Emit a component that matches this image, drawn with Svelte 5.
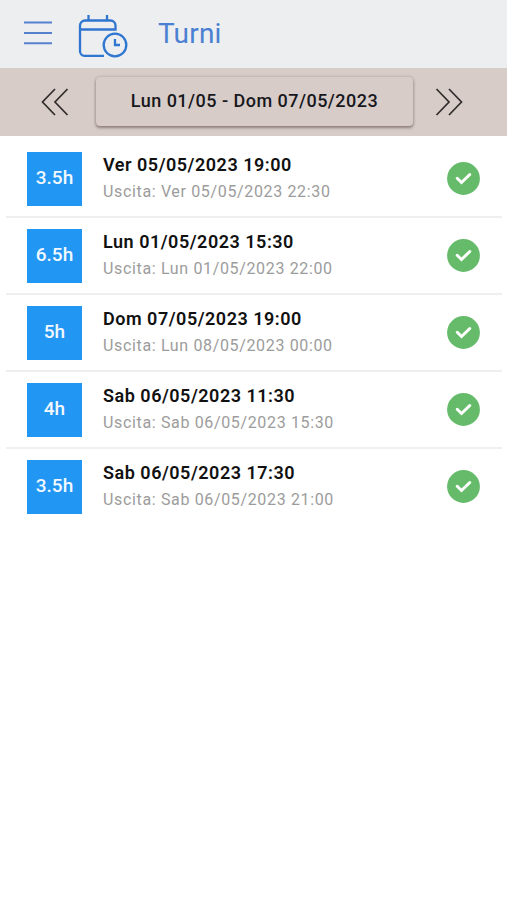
<script lang="ts">
	interface Shift {
		hours: string;
		start: string;
		end: string;
	}

	const shifts: Shift[] = [
		{ hours: '3.5h', start: 'Ver 05/05/2023 19:00', end: 'Ver 05/05/2023 22:30' },
		{ hours: '6.5h', start: 'Lun 01/05/2023 15:30', end: 'Lun 01/05/2023 22:00' },
		{ hours: '5h', start: 'Dom 07/05/2023 19:00', end: 'Lun 08/05/2023 00:00' },
		{ hours: '4h', start: 'Sab 06/05/2023 11:30', end: 'Sab 06/05/2023 15:30' },
		{ hours: '3.5h', start: 'Sab 06/05/2023 17:30', end: 'Sab 06/05/2023 21:00' }
	];
</script>

<div class="page">
	<header>
		<button class="menu" aria-label="Menu">
			<svg width="28" height="26" viewBox="0 0 28 26">
				<path d="M0 2.5h28M0 13h28M0 23.2h28" />
			</svg>
		</button>
		<svg class="calendar" width="50" height="44" viewBox="0 0 50 44">
			<path d="M10.500 1v5M29 1v5" />
			<path d="M26 41.800H6.500a4.500 4.500 0 0 1-4.500-4.500V11.500a5 5 0 0 1 5-5H32.500a5 5 0 0 1 5 5v4H2" />
			<circle cx="37" cy="31" r="11.300" />
			<path d="M37 25v6h5" />
		</svg>
		<h1>Turni</h1>
	</header>

	<nav>
		<button class="arrow" aria-label="Settimana precedente">
			<svg width="28" height="28" viewBox="0 0 28 28">
				<path d="M14 1 1.500 14 14 27M26.500 1 14 14l12.500 13" />
			</svg>
		</button>
		<button class="range">Lun 01/05 - Dom 07/05/2023</button>
		<button class="arrow" aria-label="Settimana successiva">
			<svg width="28" height="28" viewBox="0 0 28 28">
				<path d="M1.500 1 14 14 1.500 27M14 1l12.500 13L14 27" />
			</svg>
		</button>
	</nav>

	<ul>
		{#each shifts as shift}
			<li>
				<span class="hours">{shift.hours}</span>
				<div class="times">
					<strong>{shift.start}</strong>
					<small>Uscita: {shift.end}</small>
				</div>
				<svg class="done" width="33" height="33" viewBox="0 0 33 33">
					<circle cx="16.500" cy="16.500" r="16.400" />
					<path d="m10.200 16.300 4.300 4.200 8.300-8" />
				</svg>
			</li>
		{/each}
	</ul>
</div>

<style>
	:global(body) {
		background: #fff;
	}

	.page {
		width: 507px;
		font-family: Roboto, 'Liberation Sans', sans-serif;
	}

	button {
		padding: 0;
		border: 0;
		background: none;
		color: inherit;
		font: inherit;
	}

	svg {
		display: block;
		flex: none;
		fill: none;
	}

	header {
		display: flex;
		box-sizing: border-box;
		height: 68px;
		padding: 0 24px;
		background: #eceef0;
		color: #4a80d2;
	}

	.menu {
		height: 66px;
	}

	.menu svg {
		stroke: #5581cf;
		stroke-width: 2;
	}

	.calendar {
		margin: 14px 0 0 26px;
		stroke: #2f76d0;
		stroke-width: 2.3;
	}

	h1 {
		margin: 0 0 0 30px;
		font-size: 28px;
		font-weight: 400;
		line-height: 67px;
		letter-spacing: 0.2px;
	}

	nav {
		display: flex;
		box-sizing: border-box;
		height: 68px;
		padding: 9px 43px 0 41px;
		background: #d7ccc8;
	}

	.arrow {
		height: 49px;
	}

	.arrow svg {
		stroke: #302b2b;
		stroke-width: 1.7;
	}

	.range {
		width: 317px;
		height: 49px;
		margin: 0 22px 0 27px;
		padding-bottom: 2px;
		border-radius: 4px;
		box-shadow:
			0 2px 3px rgb(70 50 45 / 45%),
			0 0 3px rgb(70 50 45 / 25%);
		color: #17171c;
		font-size: 18px;
		font-weight: 500;
		letter-spacing: 0.48px;
	}

	ul {
		margin: 0;
		padding: 5px 5px 0 6px;
		list-style: none;
	}

	li {
		display: flex;
		box-sizing: border-box;
		height: 77px;
		padding: 0 22px 0 21px;
		align-items: center;
		border-bottom: 2px solid #efefef;
	}

	li:last-child {
		border-bottom-color: transparent;
	}

	.hours {
		width: 55px;
		height: 54px;
		background: #2196f3;
		color: #f1f8ff;
		font-size: 19px;
		font-weight: 500;
		line-height: 52px;
		text-align: center;
	}

	.times {
		display: flex;
		flex: 1;
		flex-direction: column;
		margin: -2px 0 0 21px;
	}

	strong {
		color: #111;
		font-size: 18px;
		font-weight: 600;
		line-height: 27px;
		letter-spacing: 0.52px;
	}

	small {
		color: #9c9c9c;
		font-size: 16px;
		line-height: 27px;
		letter-spacing: 0.65px;
	}

	.done circle {
		fill: #66bb6a;
	}

	.done path {
		stroke: #fff;
		stroke-width: 3;
		stroke-linecap: round;
	}
</style>
